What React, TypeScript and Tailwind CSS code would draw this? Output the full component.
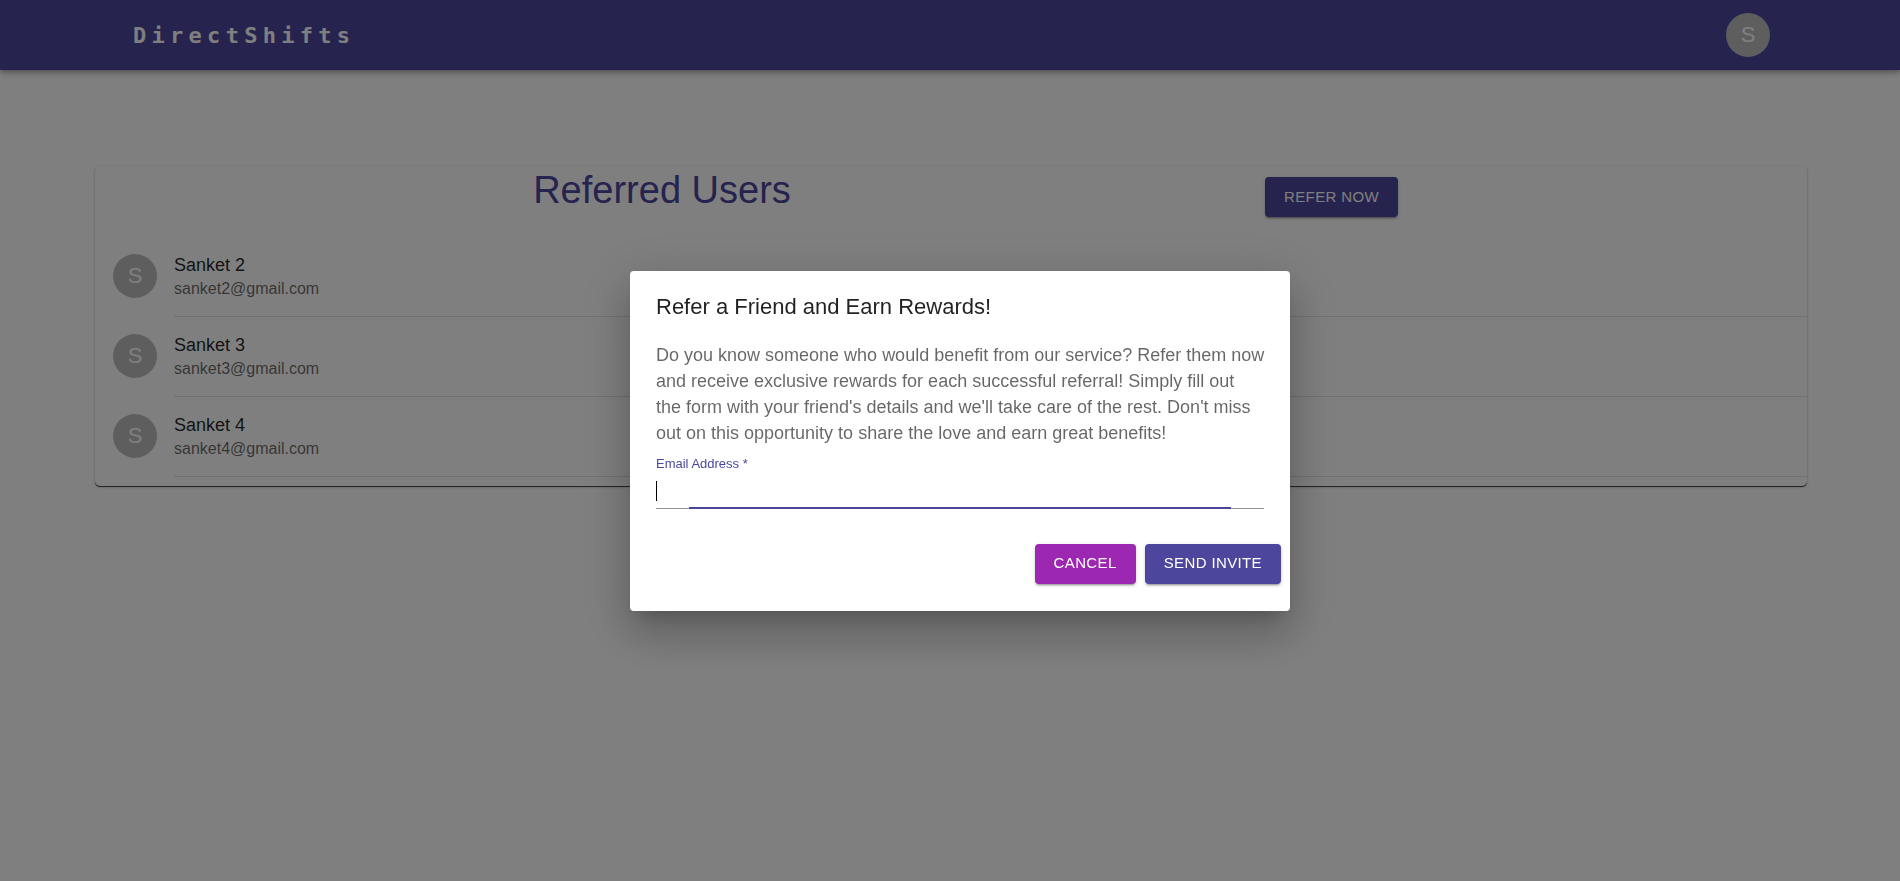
import React from "react";

type User = { name: string; email: string };

const users: User[] = [
  { name: "Sanket 2", email: "sanket2@gmail.com" },
  { name: "Sanket 3", email: "sanket3@gmail.com" },
  { name: "Sanket 4", email: "sanket4@gmail.com" },
];

function Avatar({ letter }: { letter: string }) {
  return (
    <span className="flex size-11 shrink-0 items-center justify-center rounded-full bg-[#bdbdbd] text-[22px] leading-none text-white">
      {letter}
    </span>
  );
}

function Button({
  children,
  color = "primary",
  type = "button",
}: {
  children: React.ReactNode;
  color?: "primary" | "secondary";
  type?: "button" | "submit";
}) {
  const tone = color === "primary" ? "bg-[#4c479c]" : "bg-[#9c27b0]";
  return (
    <button
      type={type}
      className={`h-10 rounded-[4px] px-[19px] text-[15px] tracking-wide whitespace-nowrap text-white uppercase shadow-[0_3px_1px_-2px_rgba(0,0,0,0.2),0_2px_2px_0_rgba(0,0,0,0.14),0_1px_5px_0_rgba(0,0,0,0.12)] ${tone}`}
    >
      {children}
    </button>
  );
}

function Header() {
  return (
    <header className="relative flex h-[70px] items-center justify-between bg-[#4c479c] pr-[130px] pl-[7%] shadow-[0_2px_4px_-1px_rgba(0,0,0,0.2),0_4px_5px_0_rgba(0,0,0,0.14),0_1px_10px_0_rgba(0,0,0,0.12)]">
      <a
        href="#"
        className="font-['DejaVu_Sans_Mono',monospace] text-[22px] font-bold tracking-[0.24em] text-white"
      >
        DirectShifts
      </a>
      <button type="button" aria-label="Account" className="rounded-full">
        <Avatar letter="S" />
      </button>
    </header>
  );
}

function ReferredUsers() {
  return (
    <section className="mt-24 mr-[93px] ml-[5%] rounded-[5px] bg-white shadow-[0_1px_0_0_rgba(0,0,0,0.5),0_2px_1px_-1px_rgba(0,0,0,0.2),0_1px_1px_0_rgba(0,0,0,0.14),0_1px_3px_0_rgba(0,0,0,0.24)]">
      <div className="grid h-[62px] grid-cols-[1134fr_578fr] items-start">
        <h1 className="text-center text-[38px] leading-[48px] text-[#4c479c]">Referred Users</h1>
        <div className="pt-[11px] pl-9">
          <Button>Refer now</Button>
        </div>
      </div>
      <ul className="py-[9px]">
        {users.map((user) => (
          <li key={user.email} className="flex h-20 pl-[18px]">
            <div className="flex w-[61px] shrink-0 items-center pb-0.5">
              <Avatar letter={user.name[0]} />
            </div>
            <div className="flex flex-1 flex-col justify-center border-b border-black/12 pb-px">
              <span className="text-lg leading-[26px] text-black/87">{user.name}</span>
              <span className="text-[16px] leading-[22px] text-black/60">{user.email}</span>
            </div>
          </li>
        ))}
      </ul>
    </section>
  );
}

function ReferDialog() {
  return (
    <div className="fixed inset-0 flex items-center justify-center bg-black/50 pl-5">
      <form
        role="dialog"
        aria-modal="true"
        aria-labelledby="refer-title"
        onSubmit={(event) => event.preventDefault()}
        className="w-[660px] rounded-[4px] bg-white shadow-[0_12px_17px_-8px_rgba(0,0,0,0.2),0_26px_42px_3px_rgba(0,0,0,0.14),0_10px_51px_9px_rgba(0,0,0,0.12)]"
      >
        <h2 id="refer-title" className="px-[26px] py-[18px] text-[22px] leading-[35px] text-black/87">
          Refer a Friend and Earn Rewards!
        </h2>
        <div className="px-[26px] pb-[22px]">
          <p className="-mr-2 text-lg leading-[26px] text-black/60">
            Do you know someone who would benefit from our service? Refer them now and receive
            exclusive rewards for each successful referral! Simply fill out
            <br />
            the form with your friend's details and we'll take care of the rest. Don't miss
            <br />
            out on this opportunity to share the love and earn great benefits!
          </p>
          <div className="relative pt-2">
            <label htmlFor="email" className="block text-[13px] leading-5 text-[#4c479c]">
              Email Address *
            </label>
            <input
              id="email"
              type="email"
              required
              className="block h-[35px] w-full border-b border-black/42 bg-transparent text-lg text-black/87 caret-transparent outline-none"
            />
            <span className="absolute bottom-2 left-0 h-5 w-px bg-black" />
            <span className="absolute inset-x-[33px] bottom-0 h-0.5 bg-[#4c479c]" />
          </div>
        </div>
        <div className="flex justify-end gap-[9px] px-[9px] pt-[13px] pb-[27px]">
          <Button color="secondary">Cancel</Button>
          <Button type="submit">Send invite</Button>
        </div>
      </form>
    </div>
  );
}

export default function App() {
  return (
    <div className="min-h-screen bg-white font-['Liberation_Sans',Arial,sans-serif]">
      <Header />
      <main>
        <ReferredUsers />
      </main>
      <ReferDialog />
    </div>
  );
}
